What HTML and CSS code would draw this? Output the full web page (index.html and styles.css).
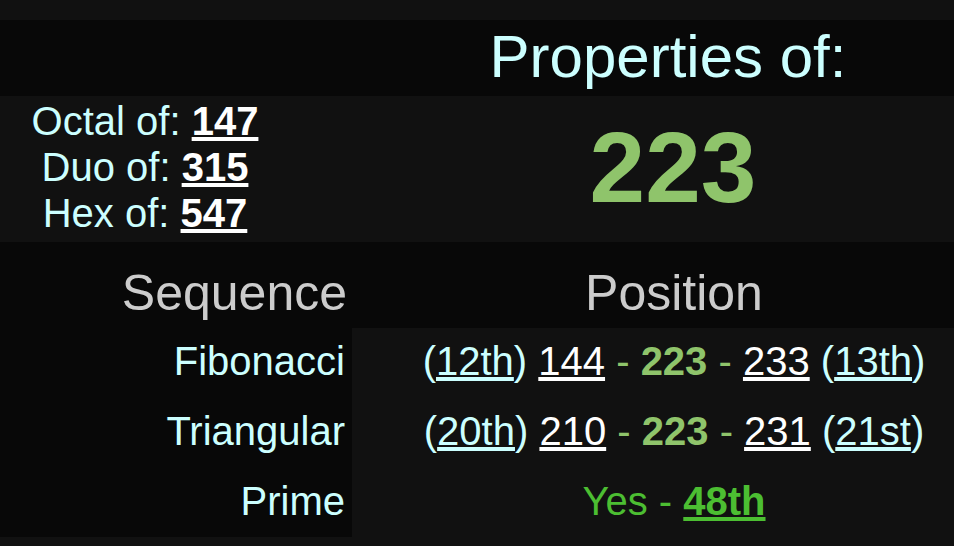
FILE: index.html
```html
<!DOCTYPE html>
<html>
<head>
<meta charset="utf-8">
<link rel="stylesheet" href="styles.css">
</head>
<body>
<div class="page">
  <div class="top">
    <div class="title-left"></div>
    <div class="title">Properties of:</div>
    <div class="bases">
      <div>Octal of: <a class="b">147</a></div>
      <div>Duo of: <a class="b">315</a></div>
      <div>Hex of: <a class="b">547</a></div>
    </div>
    <div class="number">223</div>
  </div>
  <div class="seq">
    <div class="head lab">Sequence</div>
    <div class="head pos">Position</div>

    <div class="lab">Fibonacci</div>
    <div class="pos"><span class="c">(<a class="c">12th</a>)</span> <a class="w">144</a> <span class="g">-</span> <b class="g">223</b> <span class="g">-</span> <a class="w">233</a> <span class="c">(<a class="c">13th</a>)</span></div>

    <div class="lab">Triangular</div>
    <div class="pos"><span class="c">(<a class="c">20th</a>)</span> <a class="w">210</a> <span class="g">-</span> <b class="g">223</b> <span class="g">-</span> <a class="w">231</a> <span class="c">(<a class="c">21st</a>)</span></div>

    <div class="lab">Prime</div>
    <div class="pos yes">Yes - <a class="yb">48th</a></div>
  </div>
</div>
</body>
</html>
```
FILE: styles.css
```css
html, body {
  margin: 0;
  padding: 0;
  background: #111111;
}
.page {
  padding-top: 20px;
  font-family: "Liberation Sans", Arial, sans-serif;
  color: #ccffff;
}
.top {
  display: grid;
  grid-template-columns: 290px 1fr;
}
.title-left {
  background: #080808;
}
.title {
  background: #080808;
  height: 76px;
  box-sizing: border-box;
  padding: 2px 0 0 92px;
  font-size: 60px;
  line-height: 69px;
  text-align: center;
}
.bases {
  height: 146px;
  box-sizing: border-box;
  padding-top: 2px;
  font-size: 40px;
  line-height: 46px;
  text-align: center;
}
.b {
  color: #ffffff;
  font-weight: bold;
  text-decoration: underline;
}
.number {
  padding: 21px 0 0 102px;
  font-size: 100px;
  line-height: 100px;
  font-weight: bold;
  color: #8fc46b;
  text-align: center;
}
.seq {
  display: grid;
  grid-template-columns: 352px 1fr;
  grid-template-rows: 86px 70px 70px 69px;
}
.lab {
  background: #080808;
  text-align: right;
  padding: 10px 7px 0 0;
  font-size: 40px;
  line-height: 46px;
}
.pos {
  text-align: center;
  padding: 10px 0 0 42px;
  font-size: 40px;
  line-height: 46px;
  white-space: nowrap;
}
.seq .head {
  padding-top: 23px;
  font-size: 50px;
  line-height: 57px;
  color: #cccccc;
  background: #080808;
}
.seq .head.lab {
  padding-right: 5px;
}
.c {
  color: #ccffff;
}
a.c {
  text-decoration: underline;
}
.w {
  color: #ffffff;
  text-decoration: underline;
}
.g {
  color: #8fc46b;
}
b.g {
  font-weight: bold;
}
.yes {
  color: #4cbe32;
}
.yb {
  color: #4cbe32;
  font-weight: bold;
  text-decoration: underline;
}
```
